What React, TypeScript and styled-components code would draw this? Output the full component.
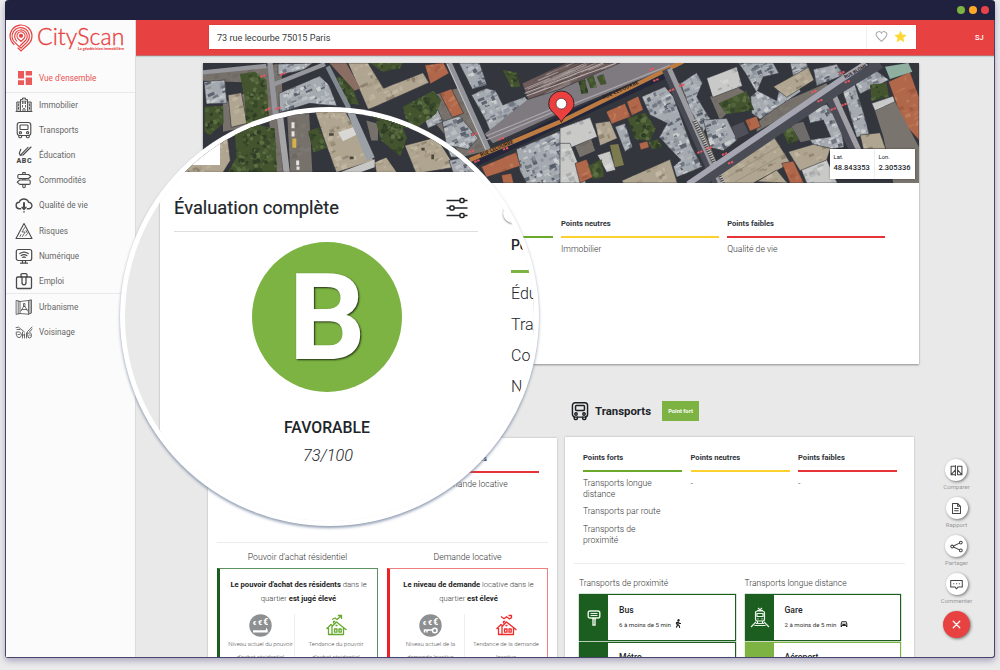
import React from 'react';
import styled, { createGlobalStyle } from 'styled-components';

const GlobalStyle = createGlobalStyle`
  * { box-sizing: border-box; }
  html, body { margin: 0; padding: 0; }
  body {
    width: 1000px;
    height: 670px;
    overflow: hidden;
    background: #ebebeb;
    font-family: Roboto, "Liberation Sans", sans-serif;
    color: #212529;
  }
`;

const RED = '#e84141';
const GREEN = '#7cb342';
const DARK_GREEN = '#1b5e20';

/* ---------- frame ---------- */

const Window = styled.div`
  position: relative;
  width: 990px;
  height: 658px;
  margin-left: 5px;
  display: flex;
  flex-direction: column;
  border: 1px solid #47456c;
  border-top: 0;
  border-radius: 4px 4px 3px 3px;
  background: #e9e9e9;
  box-shadow: 0 3px 6px rgba(80, 70, 130, 0.4);
`;

const TitleBar = styled.div`
  height: 20px;
  margin: 0 -1px;
  padding-right: 6px;
  display: flex;
  align-items: center;
  justify-content: flex-end;
  gap: 4px;
  background: #20213f;
  border-radius: 4px 4px 0 0;
`;

const Dot = styled.span<{ $color: string }>`
  width: 8px;
  height: 8px;
  border-radius: 50%;
  background: ${(p) => p.$color};
`;

const Shell = styled.div`
  display: flex;
  height: 637px;
  overflow: hidden;
`;

/* ---------- sidebar ---------- */

const Sidebar = styled.nav`
  width: 130px;
  flex: none;
  background: #fbfbfb;
  border-right: 1px solid #dcdcdc;
`;

const Logo = styled.div`
  height: 36px;
  padding: 4px 0 0 3px;
  display: flex;
  margin-bottom: 8px;
`;

const LogoText = styled.div`
  display: flex;
  flex-direction: column;
  margin-left: 4px;
  width: 87px;
  color: ${RED};
`;

const LogoName = styled.span`
  font-family: Lato, sans-serif;
  font-weight: 300;
  font-size: 23px;
  line-height: 24px;
  letter-spacing: 0.1px;
  white-space: nowrap;
  -webkit-text-stroke: 0.35px ${RED};
`;

const LogoTag = styled.span`
  margin-top: -2px;
  text-align: right;
  font-family: Lato, sans-serif;
  font-weight: 900;
  font-size: 3.8px;
  line-height: 5px;
  white-space: nowrap;
`;

const NavGroup = styled.div`
  padding-left: 9px;
  border-bottom: 1px solid #e9e9e9;
  &:last-child { border-bottom: 0; }
`;

const NavItem = styled.a<{ $active?: boolean }>`
  display: flex;
  align-items: center;
  gap: 6px;
  height: ${(p) => (p.$active ? 27.5 : 25.1)}px;
  font-size: 8.2px;
  color: ${(p) => (p.$active ? '#ea5050' : '#666')};
  svg { flex: none; }
`;

/* ---------- header ---------- */

const Page = styled.div`
  flex: 1;
  min-width: 0;
`;

const Header = styled.header`
  display: flex;
  align-items: center;
  height: 35.5px;
  padding-left: 73px;
  background: ${RED};
  border-bottom: 1px solid #c56a6c;
  box-shadow: 0 1px 1px #c5d3d5;
`;

const Search = styled.div`
  display: flex;
  align-items: center;
  width: 707px;
  height: 24px;
  background: #fff;
  box-shadow: 0 0 1px #c02020;
  padding: 1px 0 0 8px;
  font-size: 9.1px;
  color: #3a3a3a;
`;

const SearchActions = styled.div`
  display: flex;
  align-items: center;
  gap: 6px;
  width: 50px;
  height: 22px;
  margin-left: auto;
  padding: 0 0 2px 8px;
  border-left: 1px solid #f0f0f0;
`;

const User = styled.span`
  margin-left: 59px;
  font-size: 7.5px;
  font-weight: 500;
  color: #fff;
`;

/* ---------- main ---------- */

const Main = styled.main`
  padding: 7.5px 0 0 67px;
`;

const Overview = styled.section`
  position: relative;
  width: 716px;
  height: 301px;
  background: #fff;
  box-shadow: 0 1px 2px rgba(0, 0, 0, 0.4);
  svg { display: block; }
`;

const Coordinates = styled.div`
  position: absolute;
  left: 627px;
  top: 86px;
  width: 85px;
  height: 30px;
  display: grid;
  grid-template-columns: 44px 1fr;
  background: #fff;
  box-shadow: 0 0 2px rgba(0, 0, 0, 0.4);
`;

const Coordinate = styled.div`
  padding: 4px 0 0 3.5px;
  font-size: 5.9px;
  line-height: 9px;
  & + & { border-left: 1px solid #eee; }
  b { display: block; font-size: 7.5px; line-height: 12px; font-weight: 500; }
`;

const PointColumns = styled.div<{ $col: number; $gap: number; $top: number; $left: number }>`
  display: grid;
  grid-template-columns: repeat(3, ${(p) => p.$col}px);
  column-gap: ${(p) => p.$gap}px;
  padding: ${(p) => p.$top}px 0 0 ${(p) => p.$left}px;
`;

const PointHead = styled.div<{ $color: string }>`
  height: 20px;
  padding-top: 1px;
  font-size: 7.6px;
  font-weight: 700;
  line-height: 10px;
  color: #30343a;
  border-bottom: 2px solid ${(p) => p.$color};
  white-space: nowrap;
`;

const PointItem = styled.div`
  margin-top: 5.5px;
  max-width: 82px;
  font-size: 8.65px;
  font-weight: 300;
  line-height: 11.4px;
  color: #333;
`;

const Sections = styled.div`
  display: flex;
  gap: 8px;
  padding-left: 5px;
`;

const SectionHead = styled.div`
  display: flex;
  align-items: center;
  height: 20px;
  margin: 36.5px 0 16.5px 5px;
`;

const SectionTitle = styled.h2`
  margin: 0 11px 0 5px;
  font-size: 11.4px;
  font-weight: 700;
`;

const Badge = styled.span`
  width: 37px;
  height: 20px;
  text-align: center;
  font-size: 5.8px;
  line-height: 20px;
  font-weight: 700;
  color: #fff;
  background: ${GREEN};
`;

const Card = styled.section<{ $offset?: number }>`
  width: 349px;
  height: 240px;
  margin-top: ${(p) => p.$offset ?? 0}px;
  background: #fff;
  box-shadow: 0 0 2px rgba(0, 0, 0, 0.25);
  ${PointItem} { margin-top: 6px; }
`;

const Upper = styled.div<{ $h: number }>`
  height: ${(p) => p.$h}px;
  margin: 0 9px;
  border-bottom: 1px solid #ececec;
`;

const Pair = styled.div<{ $left: number; $top: number; $w: number; $gap: number }>`
  display: grid;
  grid-template-columns: repeat(2, ${(p) => p.$w}px);
  column-gap: ${(p) => p.$gap}px;
  padding: ${(p) => p.$top}px 0 0 ${(p) => p.$left}px;
`;

const PairTitle = styled.div<{ $center?: boolean }>`
  height: 16.5px;
  font-size: ${(p) => (p.$center ? 8.7 : 8.55)}px;
  line-height: 11px;
  font-weight: 300;
  color: #333;
  white-space: nowrap;
  text-align: ${(p) => (p.$center ? 'center' : 'left')};
`;

const Verdict = styled.div<{ $color: string; $edge: string }>`
  height: 120px;
  border: 1px solid ${(p) => p.$edge};
  border-left: 3px solid ${(p) => p.$color};
  text-align: center;
  padding-top: 9px;
  font-weight: 300;
  font-size: 7.65px;
  line-height: 14px;
  color: #333;
  b { font-weight: 700; color: #222; }
`;

const Gauges = styled.div`
  display: grid;
  grid-template-columns: 74px 1fr;
  margin-top: 8px;
`;

const Gauge = styled.div`
  display: flex;
  flex-direction: column;
  align-items: center;
  gap: 1px;
  padding-left: 7px;
  font-size: 6px;
  line-height: 12.6px;
  white-space: nowrap;
  color: #555;
  & + & { border-left: 1px solid #eee; padding-left: 0; }
`;

const Stop = styled.div<{ $color: string }>`
  display: flex;
  height: 47px;
  margin-bottom: 0.5px;
  border: 1.5px solid ${(p) => p.$color};
  box-shadow: 0 0 1px ${(p) => p.$color};
`;

const StopIcon = styled.div<{ $color: string }>`
  display: flex;
  align-items: center;
  justify-content: center;
  width: 28px;
  background: ${(p) => p.$color};
`;

const StopText = styled.div`
  padding: 9.5px 0 0 11px;
  font-size: 8.6px;
  font-weight: 500;
  line-height: 11px;
`;

const StopMeta = styled.div`
  display: flex;
  align-items: center;
  gap: 4px;
  margin-top: 4px;
  font-size: 6.15px;
  font-weight: 400;
  color: #333;
  svg { position: relative; top: -1.5px; }
`;

/* ---------- floating actions ---------- */

const Actions = styled.div`
  position: absolute;
  left: 931px;
  top: 459px;
  width: 39px;
  display: flex;
  flex-direction: column;
  align-items: center;
`;

const Action = styled.div`
  display: flex;
  flex-direction: column;
  align-items: center;
  height: 38px;
  font-size: 6px;
  line-height: 12px;
  color: #999;
`;

const Round = styled.span<{ $red?: boolean }>`
  display: flex;
  align-items: center;
  justify-content: center;
  width: ${(p) => (p.$red ? 27 : 22)}px;
  height: ${(p) => (p.$red ? 27 : 22)}px;
  border-radius: 50%;
  background: ${(p) => (p.$red ? RED : '#fff')};
  box-shadow: 1px 1px 3px rgba(0, 0, 0, 0.5);
`;

/* ---------- magnifying lens ---------- */

const Lens = styled.div`
  position: absolute;
  left: 114px;
  top: 106.5px;
  width: 419px;
  height: 419px;
  border-radius: 50%;
  background: #fff;
  padding: 5px;
  box-shadow: 0 2px 3px rgba(110, 125, 155, 0.75);
`;

const LensView = styled.div`
  position: relative;
  width: 409px;
  height: 409px;
  border-radius: 50%;
  overflow: hidden;
  background: #e9e9e9;
  svg { display: block; }
`;

const LensTab = styled.div`
  position: absolute;
  left: 60px;
  top: 30.5px;
  width: 35px;
  height: 23px;
  background: #fff;
`;

const LensPage = styled.div`
  position: relative;
  display: flex;
  height: 360px;
  margin-left: 35px;
  padding-left: 14px;
  background: #fff;
  box-shadow: 0 0 2px rgba(0, 0, 0, 0.3);
`;

const Score = styled.div`
  width: 304px;
  flex: none;
  display: flex;
  flex-direction: column;
  align-items: center;
`;

const ScoreHead = styled.div`
  align-self: stretch;
  display: flex;
  align-items: center;
  justify-content: space-between;
  height: 60px;
  padding: 11px 10px 0 0;
  border-bottom: 1px solid #dfdfdf;
  font-size: 18.3px;
  font-weight: 400;
  -webkit-text-stroke: 0.2px #212529;
  svg { position: relative; top: 1px; }
`;

const Grade = styled.div`
  width: 150px;
  height: 150px;
  margin: 9.5px 0 25px 2px;
  border-radius: 50%;
  background: ${GREEN};
  color: #fff;
  font-size: 121px;
  line-height: 153px;
  font-weight: 700;
  text-align: center;
  text-shadow: 1px 1px 2px rgba(0, 0, 0, 0.75);
`;

const GradeLabel = styled.div`
  margin-left: 2px;
  font-size: 15.8px;
  line-height: 22px;
  font-weight: 500;
`;

const GradeValue = styled.div`
  margin: 6px 0 0 4px;
  font-size: 16.3px;
  line-height: 22px;
  font-weight: 300;
  font-style: italic;
`;

const Strengths = styled.div`
  margin-left: 33px;
  font-size: 16px;
  font-weight: 300;
  line-height: 31px;
`;

const StrengthsHead = styled.div`
  width: 18px;
  margin: 63px 0 5px;
  padding-bottom: 15px;
  border-bottom: 3px solid ${GREEN};
  font-size: 14px;
  font-weight: 500;
  line-height: 20px;
`;

const LensKnob = styled.span`
  position: absolute;
  left: 343px;
  top: 31px;
  width: 20px;
  height: 20px;
  border-radius: 50%;
  background: #fff;
  box-shadow: 0 1px 2px rgba(0, 0, 0, 0.5);
`;

/* ---------- aerial picture ---------- */

const rng = (seed: number) => () => {
  seed = (seed * 1664525 + 1013904223) % 4294967296;
  return seed / 4294967296;
};

type Kind = 'roof' | 'tan' | 'brick' | 'tree' | 'rail' | 'ground' | 'pale';

const PALETTE: Record<Kind, string[]> = {
  roof: ['#a5aab0', '#bcc1c6', '#8d939c', '#cfd2d3', '#6c727d', '#b3b6b8', '#545a66'],
  tan: ['#b0a590', '#bdb29d', '#a2967f', '#c6bda9', '#857a68'],
  brick: ['#b0674a', '#bd7655', '#9c563d', '#c48562'],
  tree: ['#43542f', '#506339', '#37472a', '#5d7044', '#2f3d27'],
  rail: ['#6d5c5b', '#8d7f7d', '#584849', '#a59c9a'],
  ground: ['#77716c', '#807a74', '#6e6863'],
  pale: ['#c9cac8', '#dadbd9', '#b4b6b7', '#9da0a3'],
};

const Patch = ({ kind, pts }: { kind: Kind; pts: string }) => {
  const nums = pts.split(/[ ,]+/).map(Number);
  const xs = nums.filter((_, i) => i % 2 === 0);
  const ys = nums.filter((_, i) => i % 2 === 1);
  const [x0, y0] = [Math.min(...xs), Math.min(...ys)];
  const [w, h] = [Math.max(...xs) - x0, Math.max(...ys) - y0];
  const r = rng(nums.reduce((a, n, i) => a + Math.abs(n) * (i + 3), 17));
  const tones = PALETTE[kind];
  const id = `patch-${kind}-${nums.join('_')}`;
  const pick = () => tones[Math.floor(r() * tones.length)];
  const calm = kind === 'ground' || kind === 'tan' || kind === 'brick' || kind === 'pale';
  const count = Math.ceil((w * h) / (calm ? 420 : 150));
  return (
    <g>
      <clipPath id={id}><polygon points={pts} /></clipPath>
      <polygon points={pts} fill={tones[0]} />
      <g clipPath={`url(#${id})`}>
        {Array.from({ length: count }, (_, i) => {
          const x = x0 + r() * w;
          const y = y0 + r() * h;
          if (kind === 'tree') return <circle key={i} cx={x} cy={y} r={3 + r() * 5} fill={pick()} />;
          const rw = kind === 'rail' ? 30 + r() * 60 : 5 + r() * 16;
          const rh = kind === 'rail' ? 3 : 4 + r() * 9;
          return (
            <rect key={i} x={x} y={y} width={rw} height={rh} fill={pick()} opacity={calm ? 0.7 : 0.9} transform={`rotate(-23 ${x} ${y})`} />
          );
        })}
      </g>
      {kind !== 'tree' && kind !== 'ground' && <polygon points={pts} fill="none" stroke="#2e3039" strokeWidth="2.500" opacity="0.7" />}
    </g>
  );
};

const Patches = ({ kind, list }: { kind: Kind; list: string[] }) => (
  <>{list.map((pts) => <Patch key={pts} kind={kind} pts={pts} />)}</>
);

const Road = ({ d, w = 16, c = '#96979c' }: { d: string; w?: number; c?: string }) => (
  <path d={d} stroke={c} strokeWidth={w} fill="none" />
);

const HouseNumbers = ({ at }: { at: [number, number][] }) => (
  <path d={at.map(([x, y]) => `M${x - 8} ${y + 3}l16-6`).join('')} stroke="#ea5560" strokeWidth="6" strokeDasharray="7 2.500" />
);

const Aerial = () => (
  <svg width="716" height="120" viewBox="0 9 2148 360" preserveAspectRatio="none">
    <rect y="9" width="2148" height="360" fill="#34363d" />
    <Patches kind="ground" list={['0,40 200,20 205,70 0,62', '60,130 125,100 135,200 60,215', '180,20 235,10 240,170 190,180', '640,120 780,80 860,270 780,290']} />
    <Patches kind="roof" list={['3,65 65,60 72,130 10,132', '225,12 330,9 300,30 225,45', '228,100 350,48 378,75 402,138 320,130 230,158', '660,165 705,150 720,185 675,205', '718,185 770,168 825,235 795,268 730,255', '768,9 830,9 852,75 808,88', '805,105 850,85 878,92 900,135 965,110 1000,150 862,215 848,180', '940,268 1090,205 1110,369 970,369 950,330']} />
    <Patches kind="tan" list={['75,105 115,98 132,190 85,202', '435,9 495,9 542,85 660,38 678,68 512,142 495,148']} />
    <Patches kind="tree" list={['110,42 155,35 190,60 200,210 130,210 125,110', '5,140 60,138 62,190 20,225 5,215', '400,50 440,60 468,135 435,130', '500,9 600,9 590,25 540,35', '600,140 690,92 715,120 700,160 640,205 610,180', '900,30 940,38 952,80 925,82']} />
    <Patches kind="brick" list={['665,15 722,8 738,40 682,72', '710,100 745,86 782,160 748,172', '835,320 940,276 952,318 850,352', '895,345 925,340 932,369 900,369']} />
    <polygon points="380,10 430,10 472,85 455,92" fill="#8a6d63" />
    <Road d="M0 37 190 18" w={13} />
    <Road d="M200 0 218 170" />
    <Road d="M206 76 366 12" w={13} />
    <Road d="M374 20 438 145" w={14} c="#7f898f" />
    <polygon points="845,222 975,118 1080,80 1250,9 1430,9 1071,158 870,250" fill="#7e7a80" />
    <Patch kind="rail" pts="957,70 1090,9 1250,9 1071,88 975,118" />
    <Road d="M965 100 1200 9M970 108 1240 9" w={3} c="#b9b1b0" />
    <Road d="M850 240 1090 140 1400 16M850 228 1060 142" w={4} c="#a8a4a8" />
    <polygon points="820,320 1071,200 1400,50 1415,20 1071,165 830,290" fill="#24273a" />
    <Road d="M800 300 1075 184 1440 5" w={13} c="#bd7b42" />
    <Road d="M738 9 855 268" w={17} c="#93949a" />
    <Road d="M731 9 848 268" w={2.5} c="#cfcfd1" />
    <g transform="translate(1071 0)">
      <Patches kind="tree" list={['55,65 75,58 85,100 65,102', '80,55 100,45 110,82 92,85', '110,50 130,42 140,72 122,75']} />
      <Patches kind="ground" list={['35,235 90,228 105,272 60,292', '340,70 370,70 480,330 440,330', '450,110 530,80 560,100 480,180', '590,190 660,130 800,70 810,90 590,215']} />
      <Patches kind="pale" list={['0,205 90,172 112,230 35,262 0,252', '0,250 30,250 78,369 0,369', '112,285 150,273 167,330 140,337', '440,55 530,20 547,78 458,112', '720,320 800,298 832,369 740,369', '935,130 1000,108 1005,125 945,152']} />
      <Patches kind="roof" list={['165,200 195,190 217,260 195,275', '245,110 315,80 340,110 395,260 427,320 350,352 340,320 362,300 320,255 298,232 322,190 270,165', '362,70 410,38 427,70 410,110 452,180 430,217 390,150', '535,9 640,9 657,40 610,50 590,97 558,42', '572,110 592,92 650,122 660,72 710,58 722,95 600,177 575,160', '430,180 500,175 532,240 490,272 450,262', '760,28 830,13 852,45 770,77', '740,150 800,133 842,190 852,262 770,272 750,240 812,230 790,180 750,190', '842,75 880,58 917,180 927,222 890,232 860,130', '880,58 950,33 987,60 900,102', '690,9 740,9 745,25 700,50']} />
      <Patches kind="tan" list={['105,190 150,183 172,235 120,257', '185,362 330,298 352,369 190,369', '640,80 745,22 762,60 680,112', '480,330 640,228 692,310 580,369 490,369', '685,275 760,253 812,265 800,300 720,332', '590,365 650,330 682,369', '900,225 960,218 977,267 910,267']} />
      <Patches kind="brick" list={['45,310 80,298 102,350 60,369', '138,155 195,130 212,170 155,192', '200,125 235,108 250,150 215,167', '237,250 262,243 268,262 242,270', '555,180 590,168 602,200 570,214', '665,310 700,303 732,369 690,369', '985,65 1050,35 1077,110 1077,240 1030,190']} />
      <Patches kind="tree" list={['85,318 125,298 132,350 100,358', '203,175 255,158 287,205 270,242 225,237', '475,130 560,93 582,150 500,162', '663,205 690,193 717,240 685,252', '930,75 980,68 987,110 935,122', '265,245 295,238 305,262 275,268']} />
      <polygon points="150,255 175,252 192,315 165,322" fill="#7c7b4d" />
      <polygon points="515,200 550,185 567,220 530,237" fill="#50505a" />
      <polygon points="692,195 730,185 752,240 722,247" fill="#706c6c" />
      <polygon points="945,152 1005,125 1077,262 1077,369 1000,369 970,230" fill="#7a746e" />
      <polygon points="975,20 1045,9 1057,35 990,57" fill="#8fb0a1" />
      <Road d="M490 332 642 236M505 350 660 256M525 366 676 280" w={2} c="#8b8878" />
      <Road d="M318 28 472 372" w={26} c="#484a54" />
      <Road d="M328 26 482 370" w={15} c="#9b9ba1" />
      <Road d="M400 180 490 370" w={11} c="#c8c5c0" />
      <Road d="M400 180 490 370" w={11} c="#4c4c50" />
      <path d="M402 180 492 370" stroke="#cbc8c2" strokeWidth="12" strokeDasharray="3 4" fill="none" />
      <Road d="M802 92 888 282" w={30} c="#4a4b54" />
      <Road d="M812 84 898 274" w={16} c="#a0a0a6" />
      <Road d="M390 386 840 82 960 9" w={34} c="#494b55" />
      <Road d="M384 372 830 68 920 9" w={17} c="#a5a6b2" />
      <HouseNumbers at={[[275, 28], [288, 60], [335, 90], [365, 76], [420, 276], [448, 264], [494, 282], [512, 308], [762, 95], [780, 122], [846, 38], [862, 65], [820, 147], [852, 134]]} />
      <g fontFamily="Roboto, sans-serif" fontWeight="700" fontSize="15" fill="#2a211c">
        <text transform="translate(130 118) rotate(-24)" letterSpacing="1">RUE LECOURBE</text>
        <text transform="translate(856 56) rotate(-29)" fontSize="14">RUE BLOMET</text>
      </g>
    </g>
    <HouseNumbers at={[[180, 48], [194, 148], [225, 145], [240, 42], [895, 236], [908, 266], [806, 274], [822, 303], [815, 222]]} />
    <g fontFamily="Roboto, sans-serif" fontWeight="700" fontSize="15" fill="#2a211c">
      <text transform="translate(834 290) rotate(-23)">RUE LECOURBE</text>
    </g>
    <path d="M1075 187C1064 163 1037 155 1037 131a38 38 0 0 1 76 0C1113 155 1086 163 1075 187Z" fill="#ec4040" stroke="#1c1c1c" strokeWidth="2.500" />
    <circle cx="1075" cy="131" r="16" fill="#fff" stroke="#1c1c1c" strokeWidth="1.800" />
  </svg>
);

const LensAerial = () => (
  <svg width="409" height="60.500" viewBox="-234 154.500 1227 181.500" preserveAspectRatio="none">
    <rect x="-234" y="154" width="1227" height="183" fill="#34363d" />
    <Patches kind="tan" list={['-70,240 70,200 82,300 60,336 -70,336', '335,150 425,150 512,300 400,336 365,240', '605,255 700,230 757,320 660,336 638,336', '515,305 550,290 582,336 520,336']} />
    <Patches kind="ground" list={['195,150 222,150 240,336 215,336', '252,150 318,150 328,336 262,336', '490,180 525,190 525,240 505,240']} />
    <Patches kind="tree" list={['95,205 150,190 215,205 222,336 75,336 100,290', '315,212 348,200 372,262 332,276', '518,182 582,172 612,232 592,287 535,240', '480,155 600,160 640,200 580,205']} />
    <Patches kind="roof" list={['738,300 792,288 825,336 750,336', '720,240 760,250 790,290 745,290']} />
    <polygon points="405,215 450,200 462,222 420,242" fill="#d8d7d3" />
    <polygon points="430,150 452,150 515,290 492,302" fill="#9aa0a5" />
    <path d="M410 336 515 296 515 320 470 336Z" fill="#c7c8c6" />
    <Road d="M229 150 251 336" w={19} c="#a5a5a8" />
    <path d="M270 185v18M270 212v16M284 300v14M285 318v10" stroke="#e4e4e2" strokeWidth="9" />
    <path d="M274 234v28" stroke="#d6b04c" strokeWidth="12" />
    <path d="M378 218h14v8h-14zM440 288h12v8h-12zM655 262h10v8h-10zM685 282h8v14h-8z" fill="#4b453c" />
  </svg>
);

/* ---------- icons ---------- */

const Ico = ({ children, w = 18, c = '#4a4a4a', sw = 1.1 }: { children: React.ReactNode; w?: number; c?: string; sw?: number }) => (
  <svg width={w} height={w} viewBox="0 0 18 18" fill="none" stroke={c} strokeWidth={sw} strokeLinecap="round" strokeLinejoin="round">
    {children}
  </svg>
);

const BusShape = () => (
  <>
    <rect x="2.200" y="1.500" width="13.600" height="13" rx="2.500" />
    <rect x="5" y="4" width="8" height="4.500" rx="0.800" />
    <circle cx="5.400" cy="11.700" r="1.100" />
    <circle cx="12.600" cy="11.700" r="1.100" />
    <path d="M3.800 14.600v1.200q0 .9.9.9h1q.9 0 .9-.9v-1.200M11.400 14.600v1.200q0 .9.9.9h1q.9 0 .9-.9v-1.200" />
  </>
);

const icons: Record<string, React.ReactNode> = {
  home: (
    <Ico c="none">
      <path fill="#ea5a5a" d="M3 2h6v7.500H3zM10.700 2H17v4.500h-6.300zM3 11.300h6v4.800H3zM10.700 8.500H17v7.600h-6.300z" />
    </Ico>
  ),
  building: (
    <Ico sw={0.9}>
      <path d="M5.500 15.500V3.500h2V2h3v1.500h2v12M5.500 6H1.800v9.500h14.400V6h-3.700M1 15.500h16" fill="#ccc" />
      <path d="M7.500 5.500v2M10.500 5.500v2M9 5.500v2M7.500 9.500v1.500M10.500 9.500v1.500M3.500 8v1.500M3.500 11.500V13M14.500 8v1.500M14.500 11.500V13M8 15.500v-2.700h2v2.700" />
    </Ico>
  ),
  bus: <Ico><BusShape /></Ico>,
  school: (
    <Ico>
      <path d="M5.200 9.300 13 1.300M8 9 16 1M5.200 9.300l-.9-2 1.500-4M5.200 9.300 8 9" />
      <text x="1.600" y="17" fontFamily="Roboto, sans-serif" fontWeight="900" fontSize="7" letterSpacing="0.500" fill="#4a4a4a" stroke="none">ABC</text>
    </Ico>
  ),
  signs: (
    <Ico>
      <path d="M4 3.500h9.500l2.300 2-2.300 2H4q-1.200 0-1.200-1.200V4.700Q2.800 3.500 4 3.500zM14 9h-9.300l-2.500 2.200 2.500 2.200H14q1.200 0 1.200-1.200v-2Q15.200 9 14 9zM7.800 3.500V1.500h2.400v2M7.800 13.500V16q1.200 1.500 2.400 0v-2.500M8 7.600V9M10 7.600V9" />
    </Ico>
  ),
  cloud: (
    <Ico sw={1.400}>
      <path d="M5.700 12.700H4.500a3.200 3.200 0 0 1-.3-6.400 5 5 0 0 1 9.400 0 3.200 3.200 0 0 1 .2 6.400h-1.500" />
      <path d="M9 7v4.500" strokeWidth="2" />
      <path d="M7 11.200 9 13.500l2-2.300M9 15.800v.2" />
    </Ico>
  ),
  risk: (
    <Ico>
      <path d="M9 1.500 17 16.500H1Z" />
      <path d="M9.800 5.500 7 10h3.200L7.500 14.500M11 8.500l1.500 3-2 2.500M5 14.500l1-2" strokeWidth="0.800" />
    </Ico>
  ),
  digital: (
    <Ico sw={1.200}>
      <rect x="1.300" y="2.500" width="15.400" height="11" rx="2" />
      <path d="M4.800 6.600q4.200-3 8.400 0M6.200 8.600q2.800-2 5.600 0M7.600 10.400q1.400-1 2.800 0M7.500 13.600v2M10.500 13.600v2M5.500 16.200h7" />
    </Ico>
  ),
  job: (
    <Ico sw={1.300}>
      <rect x="1.500" y="5" width="15" height="11.500" rx="1.200" />
      <path d="M6 5V2.800q0-1.200 1.200-1.200h3.600q1.200 0 1.200 1.200V5M7 5v5.500q0 2.300 2 2.300t2-2.300V5" />
    </Ico>
  ),
  city: (
    <Ico sw={0.800}>
      <path d="M1.500 2.500 5 3.500l8.500-1 3-.7V15l-3 1.200-8.500-.7-3.500.8ZM5 3.500v12M13.500 2.500v13.700M3.200 3v12.700M15 2.200v13.300M6 13l2.500-4.500h1.500L12.500 13M8.500 8.500V5.500h1.400v3M7 11.500h5" />
    </Ico>
  ),
  people: (
    <Ico sw={0.800}>
      <path d="M1 4.500q3-1.500 4.800 1.500L9.500 9M17 4 12.500 8.500 12 13M1.500 9q3-1 4.500 1.200Q7 13 5 14.500q-3 .8-3.500-2zM2 6.500h3M7.500 9v6M9.500 11v4M7.500 12h2M11.500 10v5M13 10.500q3-2 3.500 1 .3 3.500-2 3.500T13 12.500M14.500 8.500q2-.5 2.500-2.500M3 11.500h1.500M14.500 12h1" />
    </Ico>
  ),
};

const LogoMark = () => (
  <svg width="24" height="28" viewBox="0 0 24 28" fill="none" stroke={RED} strokeWidth="1.150" strokeLinecap="round">
    <path d="M5 20.500A11 11 0 1 1 20.500 19L12 27 9 24" />
    <path d="M7 19.600A8.700 8.700 0 1 1 18.500 17.700L12 24.200 7 19.600" />
    <path d="M7.600 16.800A6.300 6.300 0 1 1 17 16L11 22" />
    <path d="M9.300 14.800A4 4 0 1 1 15 14.500L12 17.500 9.300 14.800" />
    <circle cx="12" cy="11.700" r="1.500" fill={RED} />
  </svg>
);

const Money = ({ keyed }: { keyed?: boolean }) => (
  <svg width="23" height="23" viewBox="0 0 23 23">
    <circle cx="11.500" cy="11.500" r="11.200" fill="#8d8f91" />
    <g fill="#fff" fontFamily="Roboto, sans-serif" fontWeight="900">
      <text x="3.800" y="11.300" fontSize="6">€</text>
      <text x="9" y="11.300" fontSize="7">€</text>
      <text x="14.300" y="11.300" fontSize="8.500">€</text>
    </g>
    {keyed ? (
      <g fill="none" stroke="#fff" strokeWidth="1.500"><circle cx="15.800" cy="16.500" r="2.300" /><path d="M13.500 16H5.500v2.500M8 16v2.500" /></g>
    ) : (
      <path d="M4 16.300h12.500l1-2.500 1.200 2.500v2.200H4z" fill="#fff" />
    )}
  </svg>
);

const HouseTrend = ({ c, down }: { c: string; down?: boolean }) => (
  <svg width="23" height="23" viewBox="0 0 23 23" fill="none" stroke={c} strokeWidth="1.300" strokeLinejoin="round">
    <path d={down ? 'M6 2.500l3 2.200 2.500-2 3 2.300 2-1.500M13.500 1.500h3V4.500' : 'M7 5.500l3-1.500 2 1.500 4-3.500M12.800 1.500h3.700V5'} />
    <path d="M1.500 15 6 10.500 7.800 12M3.500 14v6.500H7V12M7 12.500 11.500 8l10 8M18.500 14v6.500H7M9.500 15h2.500v3.200H9.500zM14 15h2.200v3.200H14zM8.500 9.500V7.500h1.800M10.500 11.500h2" />
  </svg>
);

const nav: [string, string][] = [
  ['building', 'Immobilier'],
  ['bus', 'Transports'],
  ['school', 'Éducation'],
  ['signs', 'Commodités'],
  ['cloud', 'Qualité de vie'],
  ['risk', 'Risques'],
  ['digital', 'Numérique'],
  ['job', 'Emploi'],
];

const actions: [string, React.ReactNode][] = [
  ['Comparer', <path key="c" d="M7.500 3H1.500v12h6M1.500 15l6-7v7M10.500 3h6v12h-6zM10.500 8l6 7M7.500 2v14" />],
  ['Rapport', <path key="r" d="M3.500 2h7l4 4v10h-11zM10.500 2v4h4M6.500 9h5M6.500 12h5" />],
  ['Partager', <g key="p"><circle cx="3" cy="9" r="1.900" /><circle cx="15" cy="3.500" r="1.900" /><circle cx="15" cy="14.500" r="1.900" /><path d="M4.800 8.200 13.200 4.300M4.800 9.800l8.400 3.900" /></g>],
  ['Commenter', <path key="m" d="M1 3.500h16v9h-6L9 15l-2-2.500H1zM5 8h.4M9 8h.4M12.800 8h.4" />],
];

const HEADS: [string, string][] = [
  ['Points forts', '#6aa92c'],
  ['Points neutres', '#fbd12f'],
  ['Points faibles', '#e53338'],
];

const Points = ({ items }: { items: string[][] }) => (
  <>
    {HEADS.map(([title, color], i) => (
      <div key={title}>
        <PointHead $color={color}>{title}</PointHead>
        {items[i].map((t) => (
          <PointItem key={t}>{t}</PointItem>
        ))}
      </div>
    ))}
  </>
);

const BusStopIcon = () => (
  <svg width="14" height="18" viewBox="0 0 14 18" fill="none" stroke="#e8f3e8" strokeWidth="1.400">
    <rect x="1.200" y="2" width="11.600" height="7" rx="1.800" />
    <path d="M3.500 4.500h7M3.500 6.500h7" strokeWidth="1" />
    <path d="M5 9.500h4M6 9.500V16h2V9.500" />
  </svg>
);

const TrainIcon = () => (
  <svg width="20" height="22" viewBox="0 0 20 22" fill="none" stroke="#e8f3e8" strokeWidth="1.200">
    <path d="M8 1l2 2 2-2M7 3.500h6M5.500 6q0-2 2-2h5q2 0 2 2v6q0 2-2 2h-5q-2 0-2-2zM7 6.500h6v3H7zM7.500 11.800h1M11.500 11.800h1M6 15 1 20M14 15l5 5M6 16.500h8M4.500 18.500h11M7.500 14v2M12.500 14v2" />
  </svg>
);

const WalkIcon = () => (
  <svg width="6" height="9" viewBox="0 0 12 18" fill="none" stroke="#222" strokeWidth="2.400" strokeLinecap="round">
    <circle cx="7" cy="2.500" r="1.200" fill="#222" />
    <path d="M6.500 6 5.500 11l3 2.500.7 3.500M5.300 11.500 3 16.500M6.500 6 3 7.500v2.500M7 6.500l2 2.500h2" />
  </svg>
);

const CarIcon = () => (
  <svg width="8" height="8" viewBox="0 0 24 24" fill="#222">
    <path fillRule="evenodd" d="M5 4h14l3 7v10h-4v-3H6v3H2V11zm1.500 2.500L5 11h14l-1.500-4.500zM4.500 13v2.500h3V13zm12 0v2.500h3V13z" />
  </svg>
);

const TransportStop = ({ color, icon, name, meta, by }: { color: string; icon?: React.ReactNode; name: string; meta?: string; by?: React.ReactNode }) => (
  <Stop $color={color}>
    <StopIcon $color={color}>{icon}</StopIcon>
    <StopText>
      {name}
      {meta && <StopMeta>{meta}{by}</StopMeta>}
    </StopText>
  </Stop>
);

export default function App() {
  return (
    <>
      <GlobalStyle />
      <Window>
        <TitleBar>
          <Dot $color="#7cb342" />
          <Dot $color="#ffa726" />
          <Dot $color="#e8434a" />
        </TitleBar>
        <Shell>
          <Sidebar>
            <Logo>
              <LogoMark />
              <LogoText>
                <LogoName>CityScan</LogoName>
                <LogoTag>La géodécision immobilière</LogoTag>
              </LogoText>
            </Logo>
            <NavGroup>
              <NavItem $active>{icons.home}Vue d'ensemble</NavItem>
            </NavGroup>
            <NavGroup>
              {nav.map(([icon, label]) => (
                <NavItem key={label}>{icons[icon]}{label}</NavItem>
              ))}
            </NavGroup>
            <NavGroup>
              <NavItem>{icons.city}Urbanisme</NavItem>
              <NavItem>{icons.people}Voisinage</NavItem>
            </NavGroup>
          </Sidebar>
          <Page>
            <Header>
              <Search>
                73 rue lecourbe 75015 Paris
                <SearchActions>
                  <svg width="13" height="13" viewBox="0 0 24 24" fill="none" stroke="#aaa" strokeWidth="2">
                    <path d="M12 21C5 15 2 12 2 8a5.300 5.300 0 0 1 10-2.200A5.300 5.300 0 0 1 22 8c0 4-3 7-10 13z" />
                  </svg>
                  <svg width="13" height="13" viewBox="0 0 24 24" fill="#fdd835">
                    <path d="M12 1l3.300 7.500 8.200.8-6.200 5.400 1.900 8L12 18.400 4.800 22.700l1.900-8L.5 9.300l8.200-.8z" />
                  </svg>
                </SearchActions>
              </Search>
              <User>SJ</User>
            </Header>
            <Main>
              <Overview>
                <Aerial />
                <Coordinates>
                  <Coordinate>Lat.<b>48.843353</b></Coordinate>
                  <Coordinate>Lon.<b>2.305336</b></Coordinate>
                </Coordinates>
                <PointColumns $col={158} $gap={8.200} $top={35} $left={191.800}>
                  <Points items={[[], ['Immobilier'], ['Qualité de vie']]} />
                </PointColumns>
              </Overview>
              <Sections>
                <Card $offset={74}>
                  <Upper $h={104.500}>
                    <PointColumns $col={99} $gap={8.500} $top={14.500} $left={8}>
                      <Points items={[[], [], ['Demande locative']]} />
                    </PointColumns>
                  </Upper>
                  <Pair $left={9} $top={9} $w={161} $gap={9}>
                    <div>
                      <PairTitle $center>Pouvoir d'achat résidentiel</PairTitle>
                      <Verdict $color={DARK_GREEN} $edge="#5c9160">
                        <b>Le pouvoir d'achat des résidents</b> dans le<br />quartier <b>est jugé élevé</b>
                        <Gauges>
                          <Gauge><Money /><div>Niveau actuel du pouvoir<br />d'achat résidentiel</div></Gauge>
                          <Gauge><HouseTrend c="#66a82e" /><div>Tendance du pouvoir<br />d'achat résidentiel</div></Gauge>
                        </Gauges>
                      </Verdict>
                    </div>
                    <div>
                      <PairTitle $center>Demande locative</PairTitle>
                      <Verdict $color="#ee2024" $edge="#f08080">
                        <b>Le niveau de demande</b> locative dans le<br />quartier <b>est élevé</b>
                        <Gauges>
                          <Gauge><Money keyed /><div>Niveau actuel de la<br />demande locative</div></Gauge>
                          <Gauge><HouseTrend c="#ee2c2c" down /><div>Tendance de la demande<br />locative</div></Gauge>
                        </Gauges>
                      </Verdict>
                    </div>
                  </Pair>
                </Card>
                <div>
                  <SectionHead>
                    <Ico w={20} c="#1b1e22" sw={1.300}><BusShape /></Ico>
                    <SectionTitle>Transports</SectionTitle>
                    <Badge>Point fort</Badge>
                  </SectionHead>
                  <Card>
                    <Upper $h={126.500}>
                      <PointColumns $col={99} $gap={8.500} $top={14.500} $left={9}>
                        <Points items={[['Transports longue distance', 'Transports par route', 'Transports de proximité'], ['-'], ['-']]} />
                      </PointColumns>
                    </Upper>
                    <Pair $left={14} $top={14} $w={156.500} $gap={9}>
                      <div>
                        <PairTitle>Transports de proximité</PairTitle>
                        <TransportStop color={DARK_GREEN} icon={<BusStopIcon />} name="Bus" meta="6 à moins de 5 min" by={<WalkIcon />} />
                        <TransportStop color={DARK_GREEN} name="Métro" />
                      </div>
                      <div>
                        <PairTitle>Transports longue distance</PairTitle>
                        <TransportStop color={DARK_GREEN} icon={<TrainIcon />} name="Gare" meta="2 à moins de 5 min" by={<CarIcon />} />
                        <TransportStop color={GREEN} name="Aéroport" />
                      </div>
                    </Pair>
                  </Card>
                </div>
              </Sections>
            </Main>
          </Page>
        </Shell>
        <Actions>
          {actions.map(([label, shape]) => (
            <Action key={label}>
              <Round><Ico w={13} c="#444" sw={1.400}>{shape}</Ico></Round>
              {label}
            </Action>
          ))}
          <Round $red><Ico w={13} c="#fff" sw={1.800}><path d="M4.500 4.500l9 9M13.500 4.500l-9 9" /></Ico></Round>
        </Actions>
        <Lens>
          <LensView>
            <LensAerial />
            <LensTab />
            <LensPage>
              <Score>
                <ScoreHead>
                  Évaluation complète
                  <svg width="22" height="22" viewBox="0 0 22 22" fill="#fff" stroke="#212529" strokeWidth="1.500">
                    <path d="M.5 3.500h21M.5 11h21M.5 18.500h21" />
                    <rect x="14" y="1.500" width="4" height="4" rx="1" />
                    <rect x="4" y="9" width="4" height="4" rx="1" />
                    <rect x="14" y="16.500" width="4" height="4" rx="1" />
                  </svg>
                </ScoreHead>
                <Grade>B</Grade>
                <GradeLabel>FAVORABLE</GradeLabel>
                <GradeValue>73/100</GradeValue>
              </Score>
              <Strengths>
                <StrengthsHead>Po</StrengthsHead>
                <div>Édu</div>
                <div>Tra</div>
                <div>Co</div>
                <div>N</div>
              </Strengths>
              <LensKnob />
            </LensPage>
          </LensView>
        </Lens>
      </Window>
    </>
  );
}
